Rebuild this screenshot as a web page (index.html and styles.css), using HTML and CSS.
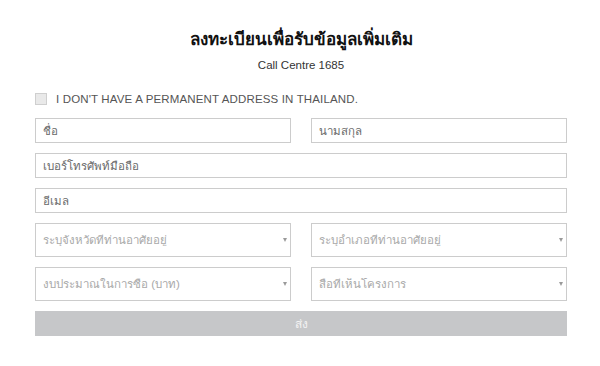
FILE: index.html
```html
<!DOCTYPE html>
<html lang="th">
<head>
    <meta charset="UTF-8">
    <meta name="viewport" content="width=device-width, initial-scale=1.0">
    <title>ลงทะเบียน</title>
    <link rel="stylesheet" href="styles.css">
</head>
<body>
    <div class="container">
        <h1>ลงทะเบียนเพื่อรับข้อมูลเพิ่มเติม</h1>
        <p class="subtitle">Call Centre 1685</p>
        <label class="check-row">
            <input type="checkbox" class="check">
            <span>I DON'T HAVE A PERMANENT ADDRESS IN THAILAND.</span>
        </label>
        <div class="row two">
            <input type="text" class="field" placeholder="ชื่อ">
            <input type="text" class="field" placeholder="นามสกุล">
        </div>
        <div class="row">
            <input type="text" class="field" placeholder="เบอร์โทรศัพท์มือถือ">
        </div>
        <div class="row">
            <input type="text" class="field" placeholder="อีเมล">
        </div>
        <div class="row two">
            <div class="select-wrap">
                <select class="select"><option>ระบุจังหวัดที่ท่านอาศัยอยู่</option></select>
                <span class="arrow"></span>
            </div>
            <div class="select-wrap">
                <select class="select"><option>ระบุอำเภอที่ท่านอาศัยอยู่</option></select>
                <span class="arrow"></span>
            </div>
        </div>
        <div class="row two">
            <div class="select-wrap">
                <select class="select"><option>งบประมาณในการซื้อ (บาท)</option></select>
                <span class="arrow"></span>
            </div>
            <div class="select-wrap">
                <select class="select"><option>สื่อที่เห็นโครงการ</option></select>
                <span class="arrow"></span>
            </div>
        </div>
        <button class="submit">ส่ง</button>
    </div>
</body>
</html>
```

FILE: styles.css
```css
body {
    margin: 0;
    background-color: #ffffff;
    font-family: 'Liberation Sans', Arial, sans-serif;
    color: #222222;
}
.container {
    width: 532px;
    padding: 28px 0 0 35px;
}
h1 {
    margin: 0;
    text-align: center;
    font-size: 17px;
    font-weight: bold;
    line-height: 24px;
    color: #111111;
}
.subtitle {
    margin: 6px 0 0;
    text-align: center;
    font-size: 11.5px;
    line-height: 14px;
    color: #333333;
}
.check-row {
    display: flex;
    align-items: center;
    gap: 9px;
    margin-top: 21px;
    font-size: 11.5px;
    color: #555555;
    letter-spacing: 0.15px;
}
.check {
    appearance: none;
    width: 12px;
    height: 12px;
    margin: 0;
    background-color: #e9e9e9;
    border: 1px solid #cfcfcf;
    box-sizing: border-box;
}
.row {
    display: grid;
    grid-template-columns: 1fr;
    margin-top: 10px;
}
.check-row + .row {
    margin-top: 13px;
}
.row.two {
    grid-template-columns: 1fr 1fr;
    gap: 20px;
}
.field {
    height: 25px;
    box-sizing: border-box;
    border: 1px solid #cccccc;
    padding: 0 7px;
    font-family: inherit;
    font-size: 11.5px;
    color: #222222;
    outline: none;
}
.field::placeholder {
    color: #6a6a6a;
}
.select-wrap {
    position: relative;
}
.select {
    appearance: none;
    width: 100%;
    height: 34px;
    box-sizing: border-box;
    border: 1px solid #cccccc;
    border-radius: 0;
    padding: 0 7px;
    background-color: #ffffff;
    font-family: inherit;
    font-size: 11.5px;
    color: #a9a9a9;
    outline: none;
}
.arrow {
    position: absolute;
    right: 4px;
    top: 15px;
    width: 0;
    height: 0;
    border-left: 2.5px solid transparent;
    border-right: 2.5px solid transparent;
    border-top: 4px solid #9a9a9a;
}
.submit {
    display: block;
    width: 100%;
    height: 25px;
    margin-top: 10px;
    border: none;
    background-color: #c6c7c9;
    color: #f3f3f3;
    font-family: inherit;
    font-size: 12px;
}
```
